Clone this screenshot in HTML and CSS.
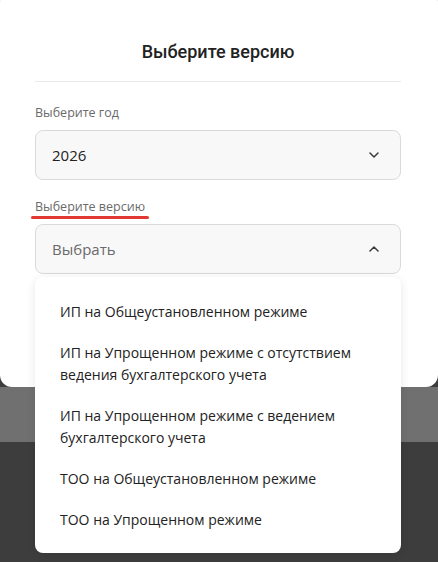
FILE: index.html
```html
<!DOCTYPE html>
<html lang="ru">
<head>
<meta charset="utf-8">
<link rel="stylesheet" href="styles.css">
</head>
<body>
<div class="page">
  <div class="modal">
    <h1 class="title">Выберите версию</h1>
    <div class="divider"></div>
    <div class="field">
      <div class="label">Выберите год</div>
      <div class="select">
        <span class="value">2026</span>
        <svg class="chev" width="10" height="6" viewBox="0 0 10 6"><path d="M1 1 L5 5 L9 1" fill="none" stroke="#3a3a3a" stroke-width="1.5" stroke-linecap="round" stroke-linejoin="round"/></svg>
      </div>
    </div>
    <div class="field field-2">
      <div class="label"><span class="marked">Выберите версию</span></div>
      <div class="select-wrap">
        <div class="select">
          <span class="value placeholder">Выбрать</span>
          <svg class="chev" width="10" height="6" viewBox="0 0 10 6"><path d="M1 5 L5 1 L9 5" fill="none" stroke="#3a3a3a" stroke-width="1.5" stroke-linecap="round" stroke-linejoin="round"/></svg>
        </div>
        <ul class="menu">
          <li>ИП на Общеустановленном режиме</li>
          <li>ИП на Упрощенном режиме с отсутствием ведения бухгалтерского учета</li>
          <li>ИП на Упрощенном режиме с ведением бухгалтерского учета</li>
          <li>ТОО на Общеустановленном режиме</li>
          <li>ТОО на Упрощенном режиме</li>
        </ul>
      </div>
    </div>
  </div>
  <div class="band"></div>
</div>
</body>
</html>
```
FILE: styles.css
```css
* { box-sizing: border-box; }
html, body {
  margin: 0;
  padding: 0;
  height: 100%;
  overflow: hidden;
}
body {
  background: #3d3d3d;
  font-family: "Open Sans", "Noto Sans", sans-serif;
  color: #222;
}
.page {
  width: 438px;
}
.modal {
  margin-top: -10px;
  background: #fff;
  border-radius: 12px;
  padding: 50px 37px 113px 35px;
}
.title {
  margin: 0;
  font-size: 18px;
  line-height: 24px;
  font-weight: 500;
  text-align: center;
  color: #222;
  font-family: Roboto, "Noto Sans", sans-serif;
}
.divider {
  height: 1px;
  background: #e9e9e9;
  margin-top: 17px;
}
.field {
  margin-top: 22px;
}
.field-2 {
  margin-top: 18px;
}
.label {
  font-size: 12.5px;
  line-height: 18px;
  color: #6a6a6a;
  margin-bottom: 8px;
}
.marked {
  position: relative;
}
.marked::after {
  content: "";
  position: absolute;
  left: -4px;
  right: -4px;
  bottom: -4px;
  height: 3px;
  border-radius: 2px;
  background: #e23a32;
}
.select-wrap {
  position: relative;
}
.select {
  height: 50px;
  border: 1px solid #dadada;
  border-radius: 8px;
  background: #f8f8f8;
  display: flex;
  align-items: center;
  justify-content: space-between;
  padding: 0 21px 0 16px;
}
.value {
  font-size: 15px;
  color: #222;
}
.placeholder {
  color: #6a6a6a;
}
.chev {
  display: block;
}
.menu {
  position: absolute;
  left: 0;
  right: 0;
  top: 53px;
  height: 276px;
  margin: 0;
  list-style: none;
  background: #fff;
  border-radius: 8px;
  box-shadow: 0 2px 10px rgba(0,0,0,0.10);
  padding: 14.5px 25px 15px 25px;
}
.menu li {
  font-size: 14px;
  line-height: 22px;
  color: #222;
  padding: 9.5px 0;
}
.band {
  height: 55px;
  background: #707070;
}
```
